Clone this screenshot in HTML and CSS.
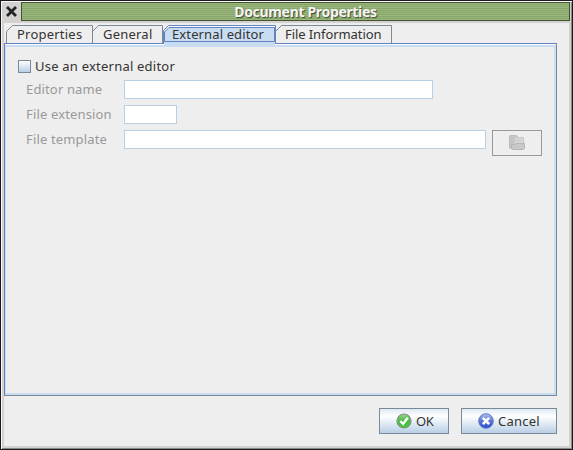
FILE: index.html
```
<!DOCTYPE html>
<html lang="en">
<head>
<meta charset="utf-8">
<title>Document Properties</title>
<link rel="stylesheet" href="styles.css">
</head>
<body>
<div class="window">
  <header class="titlebar">
    <svg class="close" width="11" height="11" viewBox="0 0 11 11"><path d="M2 2L9 9M9 2L2 9" stroke="#242424" stroke-width="2.800" stroke-linecap="square"/></svg>
    <h1 class="title">Document Properties</h1>
  </header>
  <main class="content">
    <nav class="tabs">
      <div class="tab tab-properties"><svg width="87" height="18"><path d="M.5 18V6.500L6.500.5H86.500V18"/></svg><span>Properties</span></div>
      <div class="tab tab-general"><svg width="71" height="18"><path d="M.5 6.500L6.500.5H70.500V18"/></svg><span>General</span></div>
      <div class="tab tab-editor"><svg width="113" height="21"><path class="fill" d="M1 21V7L6 2H112V21Z"/><path class="shine" d="M1.500 6L6 1.500H112"/><path class="line" d="M1.500 16.500V7L6 2.500H111.500V16.500Z"/><path class="line" d="M.5 18V5.500L5.500.5H112.500V18"/></svg><span>External editor</span></div>
      <div class="tab tab-info"><svg width="117" height="18"><path d="M.5 6.500L6.500.5H116.500V18"/></svg><span>File Information</span></div>
    </nav>
    <section class="panel">
      <label class="check"><i class="box"></i><span>Use an external editor</span></label>
      <div class="form">
        <span class="name">Editor name</span><div class="field name-field"></div>
        <span class="ext">File extension</span><div class="field ext-field"></div>
        <span class="template">File template</span><div class="row"><div class="field template-field"></div>
        <div class="browse">
          <svg width="16" height="15" viewBox="0 0 16 15"><path d="M.5 1.500Q.5.500 1.500.5H7.500L9.500 2.500V13.500H1.500Q.5 13.500.5 12.500Z" fill="#c5c5c5" stroke="#bcbcbc"/><path d="M5.500 2.500H14.500V10H5.500Z" fill="#d6d6d6" stroke="#c7c7c7"/><path d="M7 5.500H12" stroke="#cacaca"/><path d="M2.500 9.500H6L7 8.500H15.500V13.500L14.500 14.500H3.500L2.500 13.500Z" fill="#c8c8c8" stroke="#b6b6b6"/></svg>
        </div></div>
      </div>
    </section>
    <footer class="actions">
      <div class="button ok">
        <svg width="16" height="16" viewBox="0 0 16 16"><defs><linearGradient id="green" x2="0" y2="1"><stop stop-color="#93d48b"/><stop offset=".5" stop-color="#4cb944"/><stop offset="1" stop-color="#3dcc32"/></linearGradient></defs><circle cx="8" cy="8" r="7" fill="url(#green)" stroke="#80947f" stroke-width="1.200"/><path d="M4.300 8L7.100 11L11.700 4.700" fill="none" stroke="#fff" stroke-width="2.300"/></svg><span>OK</span>
      </div>
      <div class="button cancel">
        <svg width="16" height="16" viewBox="0 0 16 16"><defs><linearGradient id="blue" x2="0" y2="1"><stop stop-color="#b3c1ec"/><stop offset=".5" stop-color="#5a76d3"/><stop offset="1" stop-color="#2850cc"/></linearGradient></defs><circle cx="8" cy="8" r="7.300" fill="url(#blue)" stroke="#5f78c8"/><path d="M5.800 5.800L10.200 10.200M10.200 5.800L5.800 10.200" stroke="#fff" stroke-width="2.600" stroke-linecap="square"/></svg><span>Cancel</span>
      </div>
    </footer>
  </main>
</div>
</body>
</html>
```
FILE: styles.css
```
* { box-sizing: border-box; }
body { margin: 0; font: 13px/18px "Noto Sans", sans-serif; color: #333; letter-spacing: .22px; }
svg { display: block; flex: none; }
span { white-space: nowrap; }
.window { width: 573px; height: 450px; border: 1px solid #1c1a1c; background: #d4d2d1; box-shadow: inset 1px 1px #f8f8f8, inset -1px -1px #888; }
.titlebar { display: flex; height: 22px; padding: 1px 2px 0 5px; }
.close { margin-top: 4px; }
.title { width: 549px; height: 19px; margin: 0 0 0 4px; border: 1px solid #43532f; background: repeating-linear-gradient(#9ab87c 0 1px, #88a66b 1px 2px); color: #f4f4f4; font-size: 14px; line-height: 18px; letter-spacing: -.33px; text-align: center; text-shadow: 1px 1px 1px #3e4a33; padding-left: 20px; }
.content { width: 565px; height: 423px; margin-left: 3px; padding-top: 2px; background: #eee; }
.tabs { display: flex; height: 18px; padding-left: 2px; }
.tab { position: relative; flex: none; height: 18px; }
.tab svg { position: absolute; left: 0; top: 0; fill: none; stroke: #7a8a99; }
.tab span { position: relative; display: block; padding-left: 11px; }
.tab-properties { width: 86px; }
.tab-general { width: 71px; }
.tab-editor { width: 112px; z-index: 1; letter-spacing: .12px; }
.tab-info { width: 117px; letter-spacing: -.08px; }
.tab-editor span { padding-left: 9px; }
.tab-info span { padding-left: 10px; }
.fill { fill: #c8ddf2; stroke: none; }
.line { stroke: #6382bf; }
.shine { stroke: #fff; }
.panel { width: 553px; height: 353px; border: 1px solid #7a8a99; border-top-color: #6382bf; border-left-color: #6382bf; box-shadow: inset 0 1px #fff, inset 1px 3px #c8ddf2, inset -2px -2px #c8ddf2; padding: 13px 0 0 13px; }
.check { display: flex; height: 18px; align-items: center; }
.box { width: 13px; height: 13px; margin-right: 4px; border: 1px solid #7a8a99; background: linear-gradient(#fff, #b8cfe5); }
.form { display: grid; grid-template-columns: 98px auto; grid-template-rows: 25px 25px 27px; margin: 5px 0 0 8px; color: #999; line-height: 19px; letter-spacing: .15px; }
.field { height: 19px; border: 1px solid #b8cfe5; background: #fff; }
.name-field { width: 309px; }
.ext-field { width: 53px; }
.template-field { width: 362px; }
.row { display: flex; gap: 6px; }
.browse { width: 50px; height: 26px; border: 1px solid #999; display: flex; align-items: center; justify-content: center; padding-bottom: 1px; }
.actions { display: flex; justify-content: flex-end; gap: 12px; padding: 12px 12px 0 0; }
.button { height: 26px; display: flex; align-items: center; gap: 4px; padding-left: 16px; border: 1px solid #7a8a99; background: linear-gradient(#dde8f3, #fff 30%, #b8cfe5); }
.ok { width: 70px; letter-spacing: -.5px; }
.cancel { width: 96px; }
```
